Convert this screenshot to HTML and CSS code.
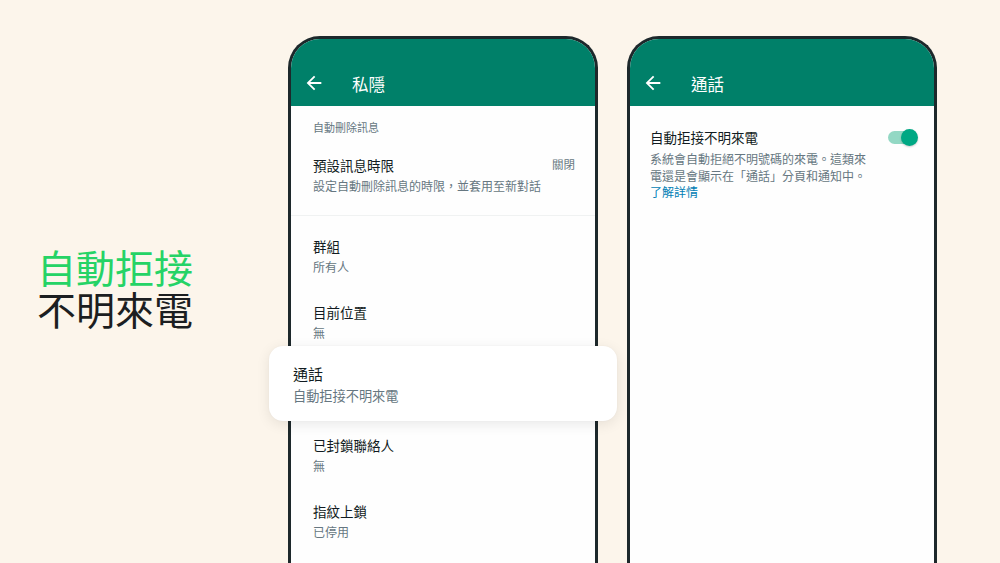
FILE: index.html
```html
<!DOCTYPE html>
<html lang="zh-Hant">
<head>
<meta charset="utf-8">
<link rel="stylesheet" href="styles.css">
</head>
<body>
<div class="stage">
  <div class="headline">
    <div class="hl-green">自動拒接</div>
    <div class="hl-dark">不明來電</div>
  </div>

  <div class="phone">
    <div class="appbar">
      <svg class="back" viewBox="0 0 24 24"><path d="M20 11H7.83l5.59-5.59L12 4l-8 8 8 8 1.41-1.41L7.83 13H20v-2z" fill="#fff"/></svg>
      <span class="appbar-title">私隱</span>
    </div>
    <div class="screen">
      <div class="section-label">自動刪除訊息</div>
      <div class="row-first">
        <div class="row-main">
          <div class="row-title">預設訊息時限</div>
          <div class="row-sub">設定自動刪除訊息的時限，並套用至新對話</div>
        </div>
        <div class="row-value">關閉</div>
      </div>
      <div class="divider"></div>
      <div class="list">
        <div class="row">
          <div class="row-title">群組</div>
          <div class="row-sub">所有人</div>
        </div>
        <div class="row">
          <div class="row-title">目前位置</div>
          <div class="row-sub">無</div>
        </div>
        <div class="card">
          <div class="card-title">通話</div>
          <div class="card-sub">自動拒接不明來電</div>
        </div>
        <div class="row">
          <div class="row-title">已封鎖聯絡人</div>
          <div class="row-sub">無</div>
        </div>
        <div class="row">
          <div class="row-title">指紋上鎖</div>
          <div class="row-sub">已停用</div>
        </div>
      </div>
    </div>
  </div>

  <div class="phone phone-second">
    <div class="appbar">
      <svg class="back" viewBox="0 0 24 24"><path d="M20 11H7.83l5.59-5.59L12 4l-8 8 8 8 1.41-1.41L7.83 13H20v-2z" fill="#fff"/></svg>
      <span class="appbar-title">通話</span>
    </div>
    <div class="screen">
      <div class="setting">
        <div class="setting-title">自動拒接不明來電</div>
        <div class="toggle"><span class="thumb"></span></div>
      </div>
      <div class="setting-desc">系統會自動拒絕不明號碼的來電。這類來<br>電還是會顯示在「通話」分頁和通知中。<br><span class="link">了解詳情</span></div>
    </div>
  </div>
</div>
</body>
</html>
```

FILE: styles.css
```css
* { box-sizing: border-box; }
html, body {
  margin: 0;
  padding: 0;
}
body {
  width: 1000px;
  height: 563px;
  overflow: hidden;
  background: #fcf5eb;
  font-family: "Noto Sans CJK TC", "Noto Sans", sans-serif;
  color: #111b21;
}
.stage {
  display: flex;
  align-items: flex-start;
  height: 563px;
  overflow: hidden;
}
.headline {
  width: 288px;
  padding-left: 37px;
  margin-top: 245px;
  font-size: 39px;
  line-height: 42px;
  flex-shrink: 0;
}
.hl-green { color: #25d366; }
.hl-dark { color: #1c1e21; }

.phone {
  flex-shrink: 0;
  width: 310px;
  height: 540px;
  margin-top: 36px;
  border: 3px solid #1d282b;
  border-bottom: 0;
  border-radius: 32px 32px 0 0;
  background: #fefefe;
}
.phone-second { margin-left: 29px; }

.appbar {
  height: 67px;
  padding-top: 23px;
  padding-left: 12px;
  display: flex;
  align-items: center;
  background: #008069;
  border-radius: 29px 29px 0 0;
}
.back {
  width: 22px;
  height: 22px;
  margin-top: -3px;
}
.appbar-title {
  margin-left: 27px;
  color: #fff;
  font-size: 16.5px;
  line-height: 22px;
}

.section-label {
  padding: 13px 22px 0;
  font-size: 11px;
  line-height: 16px;
  color: #667781;
}
.row-first {
  margin-top: 10px;
  padding: 10px 20px 18px 22px;
  display: flex;
  justify-content: space-between;
  align-items: flex-start;
}
.row-title {
  font-size: 13.5px;
  line-height: 20px;
  color: #111b21;
}
.row-sub {
  font-size: 12px;
  line-height: 22px;
  color: #667781;
}
.row-value {
  font-size: 11.5px;
  line-height: 18px;
  color: #667781;
}
.divider {
  height: 1px;
  background: #f0f2f2;
}
.list { padding-top: 10px; }
.row {
  height: 66px;
  padding: 10px 22px 14px;
}
.card {
  position: relative;
  margin: -12px -22px 4px;
  padding: 18px 24px 13px;
  background: #ffffff;
  border-radius: 14px;
  box-shadow: 0 3px 14px rgba(0, 0, 0, 0.09), 0 0 2px rgba(0, 0, 0, 0.04);
}
.card-title {
  font-size: 15px;
  line-height: 20px;
  color: #111b21;
}
.card-sub {
  font-size: 13.2px;
  line-height: 24px;
  color: #667781;
}

.setting {
  padding: 21px 16px 0 20px;
  display: flex;
  justify-content: space-between;
  align-items: flex-start;
}
.setting-title {
  font-size: 13.5px;
  line-height: 20px;
  color: #111b21;
}
.toggle {
  position: relative;
  width: 30px;
  height: 17px;
  margin-top: 2px;
}
.toggle::before {
  content: "";
  position: absolute;
  left: 0;
  top: 2px;
  width: 26px;
  height: 13px;
  border-radius: 7px;
  background: #93d8c4;
}
.thumb {
  position: absolute;
  left: 13px;
  top: 0;
  width: 17px;
  height: 17px;
  border-radius: 50%;
  background: #00a884;
  box-shadow: 0 1px 2px rgba(0, 0, 0, 0.2);
}
.setting-desc {
  margin-top: 4px;
  padding-left: 20px;
  font-size: 12px;
  line-height: 16.5px;
  color: #667781;
  white-space: nowrap;
}
.link { color: #027eb5; }
```
